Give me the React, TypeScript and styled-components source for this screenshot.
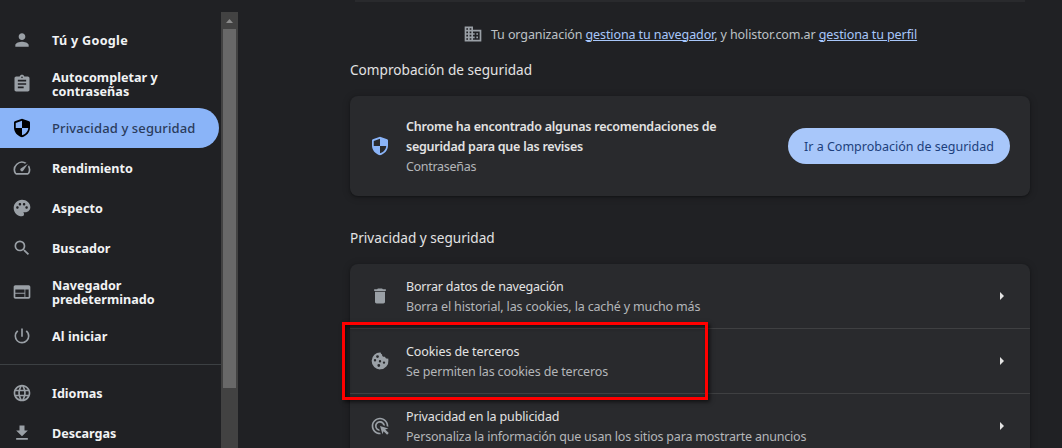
import React from "react";
import styled, { createGlobalStyle, css } from "styled-components";
import {
  MdPerson, MdAssignment, MdSpeed, MdPalette, MdSearch, MdWeb,
  MdPowerSettingsNew, MdLanguage, MdDownload, MdDomain, MdDelete, MdAdsClick,
} from "react-icons/md";

const GlobalStyle = createGlobalStyle`
  * { box-sizing: border-box; }
  body {
    margin: 0;
    background: #202124;
    color: #e3e3e3;
    font-family: "Noto Sans", "Open Sans", sans-serif;
    font-size: 12.5px;
    overflow: hidden;
  }
`;

const Page = styled.div`
  display: flex;
  height: 448px;
  overflow: hidden;
  position: relative;
`;

const Sidebar = styled.nav`
  width: 221px;
  padding-top: 20px;
  flex: none;
`;

const NavItem = styled.a<{ $active?: boolean; $tall?: boolean }>`
  display: flex;
  align-items: center;
  gap: 20px;
  width: 219px;
  height: ${(p) => (p.$tall ? 48 : 40)}px;
  padding-left: 12px;
  border-radius: 0 20px 20px 0;
  color: #f1f3f4;
  font-size: 12.6px;
  font-weight: 700;
  line-height: 14px;
  ${(p) => p.$active && css`
    background: #8ab4f8;
    color: #2b3c5c;
    font-size: 13px;
    font-weight: 500;
  `}
  svg {
    flex: none;
    color: ${(p) => (p.$active ? "#000" : "#9aa0a6")};
  }
`;

const Label = styled.span<{ $ls?: number }>`
  white-space: pre-line;
  letter-spacing: ${(p) => p.$ls ?? 0}px;
`;

const NavLabel = styled(Label)<{ $active?: boolean }>`
  padding-top: ${(p) => (p.$active ? 0 : 2)}px;
`;

const Divider = styled.hr`
  border: 0;
  height: 1px;
  margin: 8px 0;
  background: #3c4043;
`;

const Scrollbar = styled.div`
  width: 17px;
  flex: none;
  margin-top: 12px;
  background: #424242;
  display: flex;
  flex-direction: column;
  align-items: center;
`;

const ScrollArrow = styled.div`
  height: 17px;
  display: flex;
  align-items: center;
`;

const Thumb = styled.div`
  width: 13px;
  height: 359px;
  background: #686868;
`;

const Main = styled.main`
  margin-left: 112px;
  width: 680px;
  flex: none;
`;

const Card = styled.section`
  background: #292a2d;
  border-radius: 8px;
  box-shadow: 0 1px 2px rgba(0, 0, 0, 0.3), 0 1px 6px 2px rgba(0, 0, 0, 0.15);
`;

const CardEnd = styled.div`
  height: 2px;
  margin: 0 5px;
  background: #292a2d;
`;

const Managed = styled.div`
  height: 64px;
  margin-bottom: -6px;
  display: flex;
  align-items: center;
  justify-content: center;
  gap: 8px;
  color: #bdc1c6;
  svg { color: #9aa0a6; }
  a { color: #a8c7fa; text-decoration: underline; }
`;

const Heading = styled.h2<{ $ls?: number }>`
  margin: 0;
  font-size: 13.6px;
  font-weight: 400;
  line-height: 20px;
  letter-spacing: ${(p) => p.$ls ?? 0}px;
`;

const SafetyCard = styled(Card)`
  display: flex;
  align-items: center;
  height: 100px;
  margin: 16px 0 32px;
  padding: 0 20px;
`;

const RowIcon = styled.span<{ $color?: string }>`
  display: flex;
  width: 36px;
  flex: none;
  color: ${(p) => p.$color ?? "#9aa0a6"};
`;

const Texts = styled.div`
  flex: 1;
  padding-top: 1px;
  white-space: nowrap;
`;

const Title = styled.div<{ $bold?: boolean; $ls?: number }>`
  line-height: 20px;
  font-weight: ${(p) => (p.$bold ? 600 : 400)};
  letter-spacing: ${(p) => p.$ls ?? 0}px;
`;

const Sub = styled(Title)`
  color: #b4b6b9;
`;

const PillButton = styled.button`
  width: 222px;
  height: 36px;
  padding: 1px 0 0;
  border: 0;
  border-radius: 18px;
  background: #a8c7fa;
  color: #1d3f7c;
  font: inherit;
  white-space: nowrap;
`;

const ListCard = styled(Card)`
  margin-top: 16px;
  height: 240px;
`;

const Row = styled.div`
  display: flex;
  align-items: center;
  height: 65px;
  padding: 0 25px 0 20px;
  & + & { border-top: 1px solid #3f4042; }
  &:first-child { height: 64px; }
`;

const Highlight = styled.div`
  position: absolute;
  left: 342px;
  top: 322px;
  width: 366px;
  height: 78px;
  border: 3px solid #f00;
  box-shadow: 2px 2px 4px rgba(0, 0, 0, 0.6), inset 2px 2px 4px rgba(0, 0, 0, 0.6);
`;

type Icon = React.ComponentType<{ size?: number }>;

const Shield: Icon = ({ size }) => (
  <svg width={size} height={size} viewBox="0 0 24 24" fill="currentColor" fillRule="evenodd">
    <path d="M12 .9 20.6 4q1 .4 1 1.4v5.9c0 5.7-4 10.2-9.6 11.7C6.4 21.5 2.4 17 2.4 11.3V5.4q0-1 1-1.4ZM12 3.2 4.5 5.9V12H12ZM12 12v8.8c4.200-1.300 7.200-4.600 7.500-8.800Z" />
  </svg>
);

const Cookie: Icon = ({ size }) => (
  <svg width={size} height={size} viewBox="-10 -10 20 20" fill="currentColor" fillRule="evenodd">
    <path d="M.6-8.4A8.4 8.4 0 1 0 8.4-.8L8.2-2.4C6.6-2 5.4-2.7 5-4.2 3.2-3.9 1.9-4.9 2.1-6.6 1.2-6.9.7-7.5.6-8.4ZM-2.5-5.8a1.4 1.4 0 1 1 0 2.8 1.4 1.4 0 0 1 0-2.8ZM-5-1.9a1.2 1.2 0 1 1 0 2.4 1.2 1.2 0 0 1 0-2.4ZM0-.9a1.2 1.2 0 1 1 0 2.4A1.2 1.2 0 0 1 0-.9ZM4 .4a1.2 1.2 0 1 1 0 2.4A1.2 1.2 0 0 1 4 .4ZM-1.2 3.1a1.4 1.4 0 1 1 0 2.8 1.4 1.4 0 0 1 0-2.8Z" />
  </svg>
);

interface Nav { icon: Icon; label: string; ls?: number; active?: boolean; tall?: boolean }

const primary: Nav[] = [
  { icon: MdPerson, label: "Tú y Google", ls: 0.3 },
  { icon: MdAssignment, label: "Autocompletar y\ncontraseñas", ls: 0.04, tall: true },
  { icon: Shield, label: "Privacidad y seguridad", ls: 0.12, active: true },
  { icon: MdSpeed, label: "Rendimiento" },
  { icon: MdPalette, label: "Aspecto", ls: 0.1 },
  { icon: MdSearch, label: "Buscador" },
  { icon: MdWeb, label: "Navegador\npredeterminado", tall: true },
  { icon: MdPowerSettingsNew, label: "Al iniciar", ls: 0.05 },
];

const secondary: Nav[] = [
  { icon: MdLanguage, label: "Idiomas" },
  { icon: MdDownload, label: "Descargas" },
];

const rows = [
  { icon: MdDelete, title: "Borrar datos de navegación", tls: -0.19, sub: "Borra el historial, las cookies, la caché y mucho más", sls: -0.16 },
  { icon: Cookie, title: "Cookies de terceros", tls: -0.1, sub: "Se permiten las cookies de terceros", sls: -0.15 },
  { icon: MdAdsClick, title: "Privacidad en la publicidad", tls: -0.13, sub: "Personaliza la información que usan los sitios para mostrarte anuncios", sls: -0.2 },
];

const NavLink = ({ icon: Icon, label, ls, active, tall }: Nav) => (
  <NavItem $active={active} $tall={tall}>
    <Icon size={20} />
    <NavLabel $ls={ls} $active={active}>{label}</NavLabel>
  </NavItem>
);

export default function App() {
  return (
    <>
      <GlobalStyle />
      <Page>
        <Sidebar>
          {primary.map((n) => <NavLink key={n.label} {...n} />)}
          <Divider />
          {secondary.map((n) => <NavLink key={n.label} {...n} />)}
        </Sidebar>
        <Scrollbar>
          <ScrollArrow>
            <svg width="7" height="4"><path d="M0 4 3.5 0 7 4z" fill="#8b8b8b" /></svg>
          </ScrollArrow>
          <Thumb />
        </Scrollbar>
        <Main>
          <CardEnd />
          <Managed>
            <MdDomain size={20} />
            <Label $ls={-0.1}>
              Tu organización <a>gestiona tu navegador</a>, y holistor.com.ar <a>gestiona tu perfil</a>
            </Label>
          </Managed>
          <Heading $ls={0.02}>Comprobación de seguridad</Heading>
          <SafetyCard>
            <RowIcon $color="#8ab4f8"><Shield size={20} /></RowIcon>
            <Texts>
              <Title $bold $ls={-0.23}>Chrome ha encontrado algunas recomendaciones de</Title>
              <Title $bold $ls={-0.24}>seguridad para que las revises</Title>
              <Sub $ls={-0.3}>Contraseñas</Sub>
            </Texts>
            <PillButton>Ir a Comprobación de seguridad</PillButton>
          </SafetyCard>
          <Heading>Privacidad y seguridad</Heading>
          <ListCard>
            {rows.map(({ icon: Icon, title, tls, sub, sls }) => (
              <Row key={title}>
                <RowIcon><Icon size={20} /></RowIcon>
                <Texts>
                  <Title $ls={tls}>{title}</Title>
                  <Sub $ls={sls}>{sub}</Sub>
                </Texts>
                <svg width="6" height="10"><path d="M1 1 5 5 1 9z" fill="#e3e3e3" /></svg>
              </Row>
            ))}
          </ListCard>
        </Main>
        <Highlight />
      </Page>
    </>
  );
}
